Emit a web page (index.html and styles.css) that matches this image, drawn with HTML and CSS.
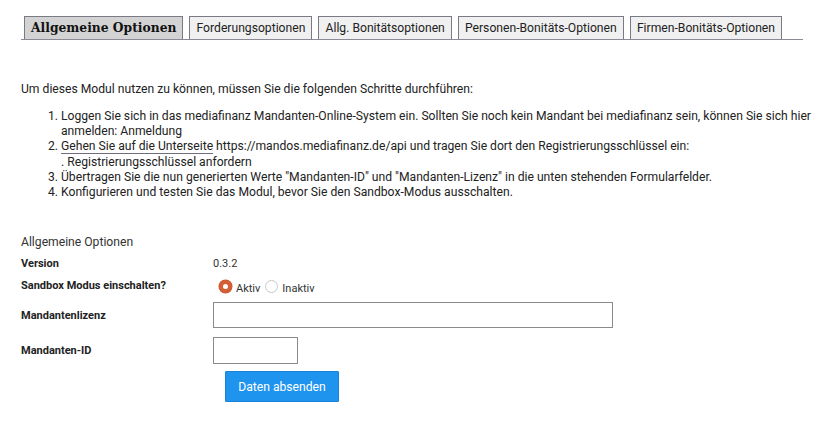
FILE: index.html
```html
<!DOCTYPE html>
<html lang="de">
<head>
<meta charset="utf-8">
<link rel="stylesheet" href="styles.css">
</head>
<body>
<div class="page">
  <ul class="tabs">
    <li class="tab active">Allgemeine Optionen</li>
    <li class="tab">Forderungsoptionen</li>
    <li class="tab">Allg. Bonitätsoptionen</li>
    <li class="tab">Personen-Bonitäts-Optionen</li>
    <li class="tab">Firmen-Bonitäts-Optionen</li>
  </ul>

  <p class="intro">Um dieses Modul nutzen zu können, müssen Sie die folgenden Schritte durchführen:</p>
  <ol class="steps">
    <li>Loggen Sie sich in das mediafinanz Mandanten-Online-System ein. Sollten Sie noch kein Mandant bei mediafinanz sein, können Sie sich hier anmelden: Anmeldung</li>
    <li><span class="ul">Gehen Sie auf die Unterseite</span> https://mandos.mediafinanz.de/api und tragen Sie dort den Registrierungsschlüssel ein:<br>. Registrierungsschlüssel anfordern</li>
    <li>Übertragen Sie die nun generierten Werte "Mandanten-ID" und "Mandanten-Lizenz" in die unten stehenden Formularfelder.</li>
    <li>Konfigurieren und testen Sie das Modul, bevor Sie den Sandbox-Modus ausschalten.</li>
  </ol>

  <h3 class="section">Allgemeine Optionen</h3>
  <div class="form">
    <div class="row r-version">
      <div class="label">Version</div>
      <div class="value">0.3.2</div>
    </div>
    <div class="row r-sandbox">
      <div class="label">Sandbox Modus einschalten?</div>
      <div class="value radios">
        <span class="radio on"></span><span class="rlabel">Aktiv</span>
        <span class="radio"></span><span class="rlabel">Inaktiv</span>
      </div>
    </div>
    <div class="row r-lizenz">
      <div class="label">Mandantenlizenz</div>
      <div class="value"><input class="inp wide" type="text"></div>
    </div>
    <div class="row r-id">
      <div class="label">Mandanten-ID</div>
      <div class="value"><input class="inp short" type="text"></div>
    </div>
    <div class="actions">
      <button class="btn">Daten absenden</button>
    </div>
  </div>
</div>
</body>
</html>
```
FILE: styles.css
```css
html, body {
  margin: 0;
  padding: 0;
  background: #fff;
}
body {
  font-family: Roboto, "Liberation Sans", sans-serif;
  color: #222;
  font-size: 12.15px;
}
.page {
  padding: 16px 0 0 21px;
}
.tabs {
  list-style: none;
  margin: 0;
  padding: 0 0 0 3px;
  width: 779px;
  display: flex;
  gap: 6px;
  border-bottom: 1px solid #8a8a96;
  height: 23px;
}
.tab {
  flex: none;
  white-space: nowrap;
  box-sizing: border-box;
  height: 23px;
  border: 1px solid #7a7a86;
  border-bottom: none;
  background: #f0f0f0;
  font-size: 12.15px;
  line-height: 22px;
  padding: 0 6.1px;
  color: #222;
}
.tab.active {
  background: #d3d3d3;
  font-family: "DejaVu Serif", serif;
  font-weight: bold;
  font-size: 12.3px;
  padding: 0 6px;
  color: #111;
}
.intro {
  margin: 42px 0 0 0;
  line-height: 15px;
}
.steps {
  margin: 12px 0 0 0;
  padding-left: 40px;
  line-height: 15.2px;
  width: 764px;
}
.ul {
  border-bottom: 1px solid #6e6e7e;
}
.section {
  margin: 35px 0 0 0;
  font-size: 12.15px;
  font-weight: normal;
  color: #333;
  line-height: 15px;
}
.form {
  margin-top: 6px;
}
.row {
  display: flex;
  align-items: center;
}
.label {
  width: 192px;
  font-size: 11px;
  font-weight: bold;
  color: #222;
}
.value {
  font-size: 11px;
  color: #333;
}
.r-version { height: 15px; }
.r-sandbox { height: 20px; margin-top: 5px; }
.r-sandbox .label { margin-top: -2px; }
.radios {
  display: flex;
  align-items: center;
  padding-left: 6px;
  padding-top: 1px;
}
.radio {
  box-sizing: border-box;
  width: 13px;
  height: 13px;
  border-radius: 50%;
  border: 1px solid #c8c8c8;
  background: #fff;
  margin-right: 4px;
}
.radio.on {
  border: 4px solid #d45f35;
  background: #fff;
  box-shadow: 0 0 0 0.5px #c2552e;
}
.rlabel {
  margin-right: 5px;
  padding-top: 4px;
}
.r-lizenz { margin-top: 6px; height: 26px; }
.r-id { margin-top: 9px; height: 27px; }
.inp {
  box-sizing: border-box;
  border: 1px solid #8a8a8a;
  background: #fff;
  margin: 0;
  padding: 0 4px;
  font-family: Roboto, sans-serif;
}
.inp.wide { width: 400px; height: 26px; }
.inp.short { width: 85px; height: 27px; }
.actions {
  padding: 7px 0 0 204px;
}
.btn {
  box-sizing: border-box;
  width: 114px;
  height: 31px;
  background: #1f94ef;
  border: 1px solid #1c82d6;
  color: #fff;
  font-family: Roboto, sans-serif;
  font-size: 12.15px;
  border-radius: 1px;
  padding: 0;
}
```
